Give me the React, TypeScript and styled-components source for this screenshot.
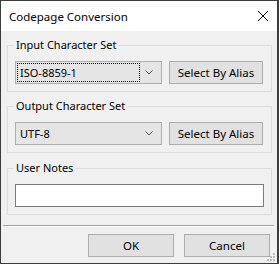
import React from "react"
import styled, { createGlobalStyle } from "styled-components";

const GlobalStyle = createGlobalStyle`
  html, body {
    margin: 0;
    padding: 0;
    background: #f0f0f0;
  }
  body {
    font-family: "Noto Sans", "Segoe UI", sans-serif;
    font-size: 11px;
    color: #000;
  }
`

const Window = styled.div`
  position: relative;
  box-sizing: border-box;
  width: 279px;
  height: 264px;
  border: 1px solid #3c3c3c;
  border-right-width: 2px;
  background: #f0f0f0;
  display: flex;
  flex-direction: column;
  overflow: hidden;
`

const TitleBar = styled.div`
  height: 30px;
  background: #fff;
  display: flex;
  align-items: center;
  justify-content: space-between;
  padding: 0 9px 0 8px;
  flex-shrink: 0;
`

const Title = styled.span`
  font-size: 11.5px;
  padding-top: 1px;
`

const CloseIcon = styled.svg`
  width: 10px;
  height: 10px;
`

const Content = styled.div`
  display: flex;
  flex-direction: column;
  padding: 6px 5px 0 6px;
`

const Group = styled.fieldset<{ $gap?: number }>`
  margin: ${ ({$gap}) => $gap ?? 0 }px 0 0 0;
  border: 1px solid #dcdcdc;
  padding: 8px 8px 7px 7px;
  min-width: 0;
`

const Legend = styled.legend`
  padding: 0 2px 0 3px;
  margin-left: -2px;
  line-height: 16px;
  height: 16px;
`

const Row = styled.div`
  display: flex;
  align-items: center;
  gap: 7px;
`

const Combo = styled.div`
  box-sizing: border-box;
  width: 147px;
  height: 23px;
  border: 1px solid #adadad;
  background: #e5e5e5;
  display: flex;
  align-items: center;
  padding: 1px 8px 1px 1px;
`

const ComboText = styled.span<{ $focused?: boolean }>`
  flex: 1;
  height: 19px;
  line-height: 18px;
  box-sizing: border-box;
  padding-left: 2px;
  border: 1px dotted ${ ({$focused}) => $focused ? "#000" : "transparent" };
`

const Chevron = styled.svg`
  width: 8px;
  height: 5px;
  margin-left: 5px;
`

const Button = styled.button<{ $width: number }>`
  box-sizing: border-box;
  width: ${ ({$width}) => $width }px;
  height: 23px;
  border: 1px solid #adadad;
  background: #e1e1e1;
  font-family: inherit;
  font-size: 11.5px;
  color: #000;
  padding: 0;
  border-radius: 0;
`

const Notes = styled.input`
  box-sizing: border-box;
  width: 249px;
  height: 23px;
  border: 1px solid #7a7a7a;
  background: #fff;
  margin: 0;
  outline: none;
`

const Separator = styled.div`
  margin: 10px 3px 0 2px;
  height: 1px;
  background: #a0a0a0;
  border-bottom: 1px solid #fff;
`

const Footer = styled.div`
  display: flex;
  justify-content: flex-end;
  gap: 10px;
  padding: 7px 7px 0 0;
`

const Grip = styled.svg`
  position: absolute;
  right: 1px;
  bottom: 1px;
  width: 10px;
  height: 10px;
`

const ComboBox = ({value, focused}: { value: string, focused?: boolean }) =>
  <Combo>
    <ComboText $focused={ focused }>{ value }</ComboText>
    <Chevron viewBox="0 0 8 5">
      <path d="M0.5 0.5 L4 4 L7.5 0.5" fill="none" stroke="#555" strokeWidth="1"/>
    </Chevron>
  </Combo>

export default function App() {
  return <>
    <GlobalStyle/>
    <Window>
      <TitleBar>
        <Title>Codepage Conversion</Title>
        <CloseIcon viewBox="0 0 10 10">
          <path d="M0 0 L10 10 M10 0 L0 10" stroke="#000" strokeWidth="1"/>
        </CloseIcon>
      </TitleBar>
      <Content>
        <Group>
          <Legend>Input Character Set</Legend>
          <Row>
            <ComboBox value="ISO-8859-1" focused/>
            <Button $width={ 94 }>Select By Alias</Button>
          </Row>
        </Group>
        <Group $gap={ 6 }>
          <Legend>Output Character Set</Legend>
          <Row>
            <ComboBox value="UTF-8"/>
            <Button $width={ 94 }>Select By Alias</Button>
          </Row>
        </Group>
        <Group $gap={ 7 }>
          <Legend>User Notes</Legend>
          <Notes/>
        </Group>
      </Content>
      <Separator/>
      <Footer>
        <Button $width={ 86 }>OK</Button>
        <Button $width={ 86 }>Cancel</Button>
      </Footer>
      <Grip viewBox="0 0 10 10">
        <rect x="7" y="1" width="2" height="2" fill="#bcbcbc"/>
        <rect x="4" y="4" width="2" height="2" fill="#bcbcbc"/>
        <rect x="7" y="4" width="2" height="2" fill="#bcbcbc"/>
        <rect x="1" y="7" width="2" height="2" fill="#bcbcbc"/>
        <rect x="4" y="7" width="2" height="2" fill="#bcbcbc"/>
        <rect x="7" y="7" width="2" height="2" fill="#bcbcbc"/>
      </Grip>
    </Window>
  </>
}
